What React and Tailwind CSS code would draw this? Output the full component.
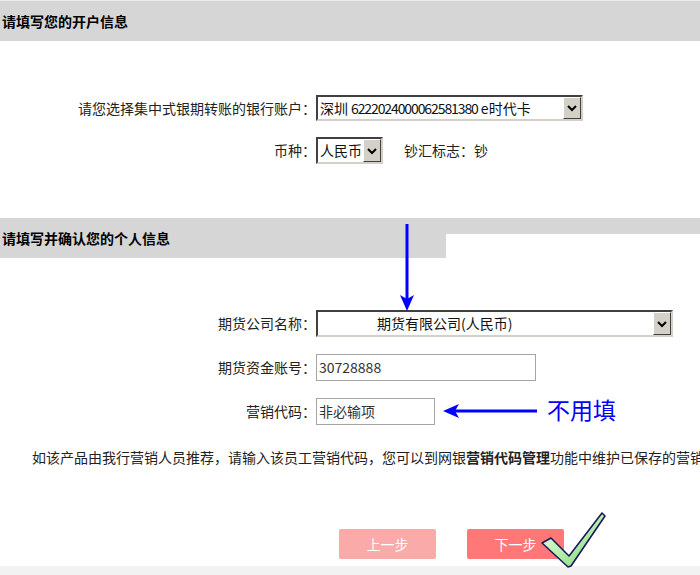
import React from "react";

const font = { fontFamily: '"Noto Sans CJK SC", "Liberation Sans", sans-serif' };

const Chevron = () => (
  <svg width="12" height="10" viewBox="0 0 12 10">
    <path d="M2 3 L6 7 L10 3" fill="none" stroke="#000" strokeWidth="2" />
  </svg>
);

const SelectBox = ({ className, children, textClass = "pl-[2px]" }) => (
  <div
    className={`flex border-2 border-t-[#404040] border-l-[#404040] border-b-[#d4d0c8] border-r-[#d4d0c8] bg-white ${className}`}
  >
    <div className={`flex-1 flex items-center overflow-hidden whitespace-nowrap text-[14px] text-[#111] ${textClass}`}>
      {children}
    </div>
    <div className="w-[18px] flex items-center justify-center bg-[#d4d0c8] border border-t-[#fff] border-l-[#fff] border-b-[#404040] border-r-[#404040]">
      <Chevron />
    </div>
  </div>
);

const Row = ({ label, children, className = "" }) => (
  <div className={`flex items-center ${className}`}>
    <div className="w-[316px] shrink-0 text-right text-[14px] text-[#222]">{label}</div>
    {children}
  </div>
);

const App = () => {
  return (
    <div className="relative w-[700px] h-[575px] overflow-hidden bg-white" style={font}>

      {/* section 1 */}

      <div className="h-[41px] bg-[#d6d6d6] border-t border-[#ebebeb] flex items-center pl-[2px]">
        <span className="text-[14px] font-bold text-black">请填写您的开户信息</span>
      </div>

      <Row label="请您选择集中式银期转账的银行账户：" className="mt-[54px] h-[26px]">
        <SelectBox className="w-[267px] h-[26px]">
          深圳 <span className="ml-[3px] tracking-[-1.1px]">6222024000062581380</span>&nbsp;e时代卡
        </SelectBox>
      </Row>

      <Row label="币种：" className="mt-[16px] h-[27px]">
        <SelectBox className="w-[67px] h-[27px]">人民币</SelectBox>
        <span className="ml-[21px] text-[14px] text-[#222]">钞汇标志：钞</span>
      </Row>

      {/* section 2 */}

      <div className="mt-[54px] h-[40px] flex">
        <div className="w-[446px] bg-[#d6d6d6] flex items-center pl-[2px]">
          <span className="text-[14px] font-bold text-black">请填写并确认您的个人信息</span>
        </div>
        <div className="flex-1 flex flex-col">
          <div className="h-[16px] bg-[#d6d6d6]" />
        </div>
      </div>

      <Row label="期货公司名称：" className="mt-[52px] h-[27px]">
        <SelectBox className="w-[357px] h-[27px]" textClass="pl-[59px]">
          期货有限公司(人民币)
        </SelectBox>
      </Row>

      <Row label="期货资金账号：" className="mt-[17px] h-[27px]">
        <div className="w-[220px] h-[27px] border border-[#a5a5a5] flex items-center pl-[2px] text-[14px] text-[#333]">
          30728888
        </div>
      </Row>

      <Row label="营销代码：" className="mt-[17px] h-[27px]">
        <div className="w-[119px] h-[27px] border border-[#a5a5a5] flex items-center pl-[2px] text-[14px] text-[#333]">
          非必输项
        </div>
      </Row>

      <p className="mt-[22px] pl-[32px] h-[20px] leading-[20px] whitespace-nowrap text-[14px] text-[#222]">
        如该产品由我行营销人员推荐，请输入该员工营销代码，您可以到网银<b>营销代码管理</b>功能中维护已保存的营销代码
      </p>

      <div className="mt-[62px] flex pl-[339px] gap-[31px]">
        <button className="w-[97px] h-[30px] bg-[#fbaaaa] rounded-[2px] text-white text-[14px]">
          上一步
        </button>
        <button className="w-[97px] h-[30px] bg-[#ff7777] rounded-[2px] text-white text-[14px]">
          下一步
        </button>
      </div>

      <div className="mt-[7px] h-[10px] bg-[#f2f2f2]" />

      {/* annotations */}

      <svg className="absolute left-[398px] top-[223px]" width="18" height="90" viewBox="0 0 18 90">
        <rect x="7.5" y="1" width="3" height="76" fill="#0000ff" />
        <path d="M2 72 L9 88 L16 72 L9 76 Z" fill="#0000ff" />
      </svg>

      <svg className="absolute left-[441px] top-[402px]" width="98" height="18" viewBox="0 0 98 18">
        <rect x="12" y="7.5" width="84" height="3" fill="#0000ff" />
        <path d="M18 2 L2 9 L18 16 L14 9 Z" fill="#0000ff" />
      </svg>

      <span className="absolute left-[547px] top-[394px] text-[23px] leading-[30px] text-[#0000ff]">
        不用填
      </span>

      <svg className="absolute left-[538px] top-[510px]" width="70" height="60" viewBox="0 0 70 60">
        <defs>
          <linearGradient id="ck" x1="0" y1="0" x2="1" y2="1">
            <stop offset="0" stopColor="#f4fff0" />
            <stop offset="0.5" stopColor="#b9f0ad" />
            <stop offset="1" stopColor="#6fcf6a" />
          </linearGradient>
        </defs>
        <path
          d="M4 33 L13 28 L31 46 L64 3 L67 6 L33 56 L30 57 Z"
          fill="url(#ck)"
          stroke="#1a1a5c"
          strokeWidth="1.6"
          strokeLinejoin="round"
        />
      </svg>

    </div>
  );
};

export default App;
